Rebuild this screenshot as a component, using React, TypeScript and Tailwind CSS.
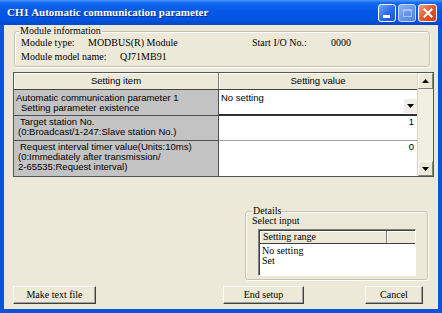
import React from "react";

const sans = "font-['Liberation_Sans',Arial,sans-serif]";

function TitleButtons() {
  return (
    <div className="ml-auto flex gap-[2px] items-center">
      <div className="w-[18px] h-[18px] rounded-[3px] border border-white bg-[linear-gradient(135deg,#6FA6FF_0%,#2A6BEA_55%,#1C55D6_100%)] flex items-end pl-[4px] pb-[3px]">
        <div className="w-[7px] h-[3px] bg-white" />
      </div>
      <div className="w-[18px] h-[18px] rounded-[3px] border border-[#C9DAF8] bg-[linear-gradient(135deg,#8DB4F5_0%,#5F92EA_60%,#4F83E2_100%)] flex items-center justify-center">
        <div className="w-[9px] h-[8px] border border-[#A8C3F2] border-t-2" />
      </div>
      <div className="w-[19px] h-[18px] rounded-[3px] border border-white bg-[linear-gradient(135deg,#F0A080_0%,#E2592F_50%,#C9401A_100%)] flex items-center justify-center">
        <svg width="10" height="10" viewBox="0 0 10 10">
          <path d="M1.5 1.5 L8.5 8.5 M8.5 1.5 L1.5 8.5" stroke="white" strokeWidth="2" strokeLinecap="square" />
        </svg>
      </div>
    </div>
  );
}

function Arrow({ up }: { up?: boolean }) {
  return (
    <svg width="7" height="4" viewBox="0 0 7 4">
      {up ? <path d="M0 4 L3.5 0 L7 4 Z" fill="black" /> : <path d="M0 0 L7 0 L3.5 4 Z" fill="black" />}
    </svg>
  );
}

function Btn({ label, cls }: { label: string; cls: string }) {
  return (
    <div
      className={`${cls} h-[18px] flex items-center justify-center bg-[#ECE9D8] border border-t-white border-l-white border-r-[#404040] border-b-[#404040] shadow-[inset_-1px_-1px_0_#A0A0A0] text-[10px] leading-none`}
    >
      {label}
    </div>
  );
}

export default function App() {
  return (
    <div className="w-[442px] h-[313px] flex flex-col bg-[#0A53DB] overflow-hidden font-['Liberation_Serif',serif] text-black">
      <div className="h-[25px] shrink-0 flex items-center pl-[7px] pr-[5px] bg-[linear-gradient(180deg,#4A97FF_0%,#1468F0_12%,#0458E6_45%,#0254E0_80%,#0047C8_100%)]">
        <span className="text-white font-bold text-[11px] leading-none [text-shadow:1px_1px_0_#0A2F8A]">
          CH1 Automatic communication parameter
        </span>
        <TitleButtons />
      </div>

      <div className="flex-1 mx-[4px] mb-[4px] bg-[#ECE9D8] flex flex-col">
        {/* Module information */}
        <fieldset className="mt-[1px] ml-[10px] mr-[8px] h-[41px] border border-[#C5C2B2] rounded-[3px] pl-[6px] shadow-[inset_1px_1px_0_#fff,1px_1px_0_#fff]">
          <legend className="-ml-[2px] px-[1px] text-[10px] leading-[10px]">Module information</legend>
          <div className="flex text-[10px] leading-[14px]">
            <span className="w-[67px]">Module type:</span>
            <span className="w-[164px]">MODBUS(R) Module</span>
            <span className="w-[79px]">Start I/O No.:</span>
            <span>0000</span>
          </div>
          <div className="flex text-[10px] leading-[14px]">
            <span className="w-[99px]">Module model name:</span>
            <span>QJ71MB91</span>
          </div>
        </fieldset>

        {/* Table */}
        <div className={`mt-[5px] ml-[9px] mr-[4px] h-[105px] flex border border-[#555555] ${sans} text-[9.5px] leading-[10px]`}>
          <div className="flex-1 flex flex-col">
            <div className="h-[17px] shrink-0 flex bg-[#ECE9D8] border-b border-[#404040]">
              <div className="w-[205px] flex items-center justify-center border-r border-[#808080] shadow-[inset_1px_1px_0_#fff]">
                Setting item
              </div>
              <div className="flex-1 flex items-center justify-center shadow-[inset_1px_1px_0_#fff]">Setting value</div>
            </div>
            <div className="h-[26px] shrink-0 flex">
              <div className="w-[205px] bg-[#C3C3C3] border-r border-b border-[#505050] pl-[2px] pt-[3px]">
                <div>Automatic communication parameter 1</div>
                <div className="pl-[5px]">Setting parameter existence</div>
              </div>
              <div className="flex-1 bg-white flex justify-between border-b-2 border-[#303030]">
                <span className="pl-[2px] pt-[3px]">No setting</span>
                <div className="self-end mb-[1px] w-[13px] h-[14px] bg-[#EEEDE6] flex items-center justify-center">
                  <Arrow />
                </div>
              </div>
            </div>
            <div className="h-[25px] shrink-0 flex">
              <div className="w-[205px] bg-[#C3C3C3] border-r border-b border-[#505050] pl-[4px] pt-[1px]">
                <div className="pl-[2px]">Target station No.</div>
                <div>(0:Broadcast/1-247:Slave station No.)</div>
              </div>
              <div className="flex-1 bg-white border-b border-[#A0A0A0] text-right pr-[3px] pt-[1px]">1</div>
            </div>
            <div className="flex-1 flex">
              <div className="w-[205px] bg-[#C3C3C3] border-r border-[#505050] pl-[4px] pt-[1px]">
                <div className="pl-[2px]">Request interval timer value(Units:10ms)</div>
                <div>(0:Immediately after transmission/</div>
                <div>2-65535:Request interval)</div>
              </div>
              <div className="flex-1 bg-white text-right pr-[3px] pt-[1px]">0</div>
            </div>
          </div>
          <div className="w-[16px] flex flex-col bg-[#F1EFE2] border-l border-[#D8D5C5]">
            <div className="h-[16px] flex items-center justify-center bg-[#ECE9D8] border border-t-white border-l-white border-r-[#808080] border-b-[#808080]">
              <Arrow up />
            </div>
            <div className="flex-1" />
            <div className="h-[15px] flex items-center justify-center bg-[#ECE9D8] border border-t-white border-l-white border-r-[#808080] border-b-[#808080]">
              <Arrow />
            </div>
          </div>
        </div>

        {/* Details */}
        <fieldset className="mt-[29px] self-end mr-[10px] w-[183px] h-[74px] border border-[#C5C2B2] rounded-[3px] pl-[6px] shadow-[inset_1px_1px_0_#fff,1px_1px_0_#fff]">
          <legend className="px-[1px] text-[10px] leading-[10px]">Details</legend>
          <div className="text-[10px] leading-[10px]">Select input</div>
          <div className="mt-[3px] ml-[6px] w-[158px] h-[47px] bg-white border border-t-[#808080] border-l-[#808080] border-r-white border-b-white shadow-[inset_1px_1px_0_#404040] flex flex-col">
            <div className="h-[13px] flex bg-[#ECE9D8] border-b border-[#404040] ml-[1px] mt-[1px]">
              <div className="w-[127px] border-r border-[#808080] pl-[3px] text-[10px] leading-[12px] shadow-[inset_1px_1px_0_#fff]">
                Setting range
              </div>
              <div className="flex-1 shadow-[inset_1px_1px_0_#fff]" />
            </div>
            <div className="pl-[3px] pt-[2px] text-[10px] leading-[10px]">
              <div>No setting</div>
              <div>Set</div>
            </div>
          </div>
        </fieldset>

        {/* Buttons */}
        <div className="mt-[6px] flex">
          <Btn label="Make text file" cls="ml-[9px] w-[83px]" />
          <Btn label="End setup" cls="ml-[127px] w-[81px]" />
          <Btn label="Cancel" cls="ml-[61px] w-[58px]" />
        </div>
      </div>
    </div>
  );
}
